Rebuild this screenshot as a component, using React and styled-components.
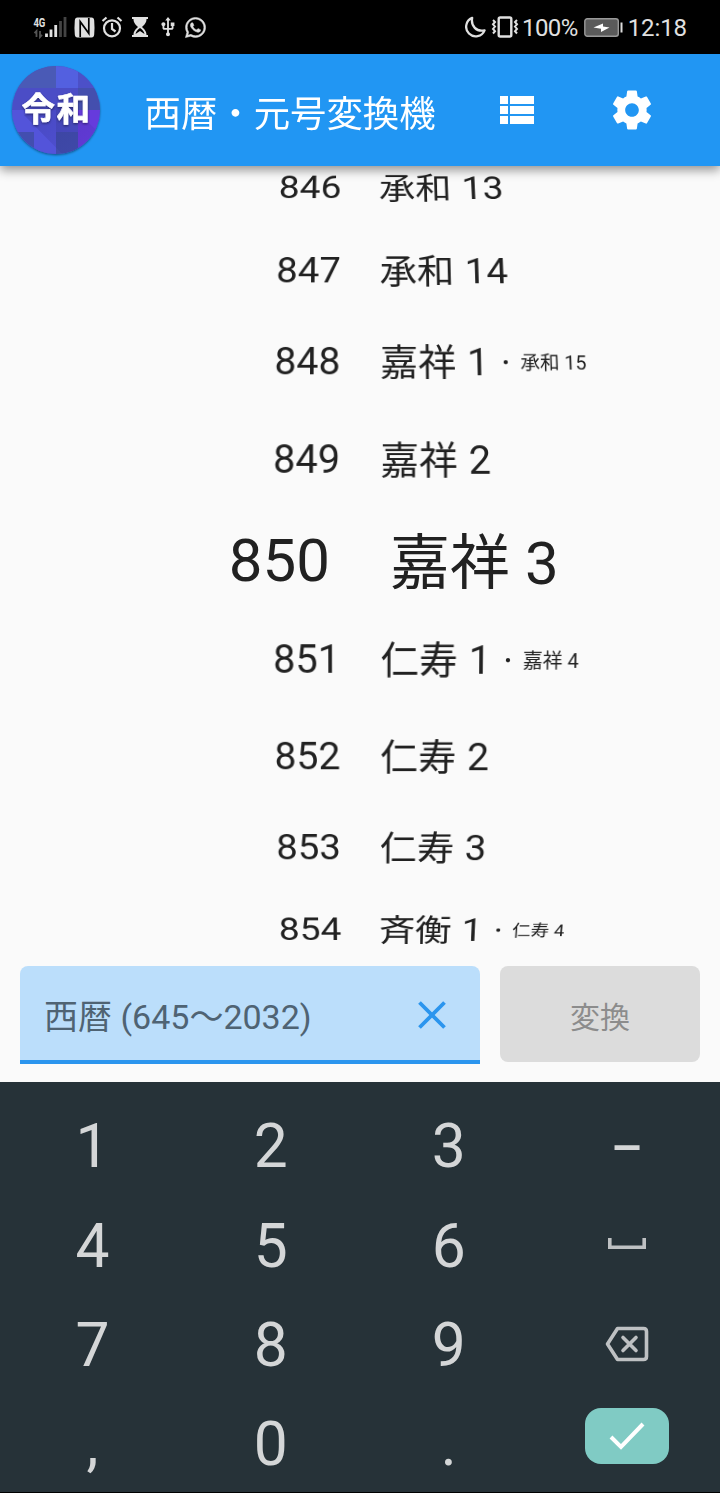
import React from 'react';
import styled, { createGlobalStyle } from 'styled-components';
import { FaWhatsapp } from 'react-icons/fa';
import { MdUsb } from 'react-icons/md';

const Global = createGlobalStyle`
  * { box-sizing: border-box; }
  body { margin: 0; background: #fafafa; font-family: Roboto, "Noto Sans CJK JP", sans-serif; }
  svg { display: block; flex: none; }
`;

const Screen = styled.div`
  width: 720px;
  height: 1493px;
  display: flex;
  flex-direction: column;
  overflow: hidden;
  background: #fafafa;
`;

const StatusBar = styled.div`
  height: 54px;
  flex: none;
  background: #000;
  color: #e0e0e0;
  display: flex;
  align-items: center;
  justify-content: space-between;
  padding: 0 33px 0 33px;
`;

const StatusText = styled.span`
  font-size: 24px;
  line-height: 28px;
  padding-top: 2px;
  margin-left: ${(p) => p.$gap}px;
  letter-spacing: ${(p) => p.$track || 0}px;
`;

const StatusGroup = styled.div`
  display: flex;
  align-items: center;
`;

const Spacer = styled.span`
  width: ${(p) => p.$w}px;
`;

const AppBar = styled.header`
  height: 112px;
  flex: none;
  background: #2196f3;
  box-shadow: 0 4px 10px rgba(0, 0, 0, 0.42);
  display: flex;
  align-items: center;
  padding-left: 8px;
  z-index: 1;
`;

const Title = styled.h1`
  margin: 2px 0 0 40.5px;
  width: 347.5px;
  font-family: "Noto Sans CJK JP", sans-serif;
  font-size: 36.4px;
  font-weight: 400;
  line-height: 52px;
  color: #fff;
  white-space: nowrap;
`;

const IconButton = styled.button`
  padding: 0;
  border: 0;
  background: none;
  color: #fff;
  margin-right: ${(p) => p.$gap || 0}px;
`;

const Wheel = styled.main`
  height: 800px;
  flex: none;
  overflow: hidden;
`;

const WheelTrack = styled.div`
  margin-top: -18px;
  display: flex;
  flex-direction: column;
`;

const WheelRow = styled.div`
  height: ${(p) => p.$h}px;
  display: grid;
  grid-template-columns: ${(p) => (p.$big ? '330px 1fr' : '340px 1fr')};
  column-gap: ${(p) => (p.$big ? 60 : 40)}px;
  align-items: center;
  font-size: ${(p) => (p.$big ? 60 : 40)}px;
  line-height: 1;
  color: #212121;
  white-space: nowrap;
  transform: perspective(1600px) rotateX(${(p) => p.$tilt}deg) scale(${(p) => p.$scale});
`;

const Year = styled.span`
  text-align: right;
`;

const Era = styled.span`
  padding-top: ${(p) => (p.$big ? 5 : 2)}px;
  display: flex;
  align-items: baseline;
`;

const EraName = styled.span`
  display: inline-block;
  font-size: ${(p) => (p.$big ? 60 : 39)}px;
  padding-left: ${(p) => (p.$big ? 0 : 0.6)}px;
`;

const EraYear = styled.span`
  padding-left: ${(p) => (p.$big ? 0 : 1)}px;
  white-space: pre;
`;

const AltEra = styled.span`
  display: flex;
  align-self: center;
  gap: 5px;
  font-size: 20px;
  margin-left: 7px;
`;

const Form = styled.form`
  height: 116px;
  flex: none;
  display: flex;
  align-items: flex-start;
  gap: 20px;
  padding: 0 20px;
`;

const Field = styled.div`
  width: 460px;
  height: 98px;
  background: #bbdefb;
  border-bottom: 4px solid #2b95ee;
  border-radius: 8px 8px 0 0;
  display: flex;
  align-items: center;
  justify-content: space-between;
  padding: 4px 34px 0 24px;
  color: #4f6373;
`;

const Placeholder = styled.span`
  padding-top: 3px;
  font-size: 34px;
  line-height: 48px;
`;

const ConvertButton = styled.button`
  width: 200px;
  height: 96px;
  border: 0;
  border-radius: 8px;
  background: #dcdcdc;
  color: #8c8c8c;
  font: 400 30px/44px "Noto Sans CJK JP", sans-serif;
  padding: 1px 0 0;
`;

const Keyboard = styled.div`
  height: 411px;
  flex: none;
  background: #263238;
  border-bottom: 1px solid #000;
  padding: 16px 4px 0 3.5px;
  display: grid;
  grid-template-columns: repeat(4, 178.1px);
  grid-template-rows: repeat(4, 99.2px);
`;

const Key = styled.button`
  border: 0;
  padding: 0 0 ${(p) => p.$lift || 0}px;
  background: none;
  color: #d4d6d7;
  font: ${(p) => p.$weight || 400} ${(p) => p.$size || 60.5}px/1 Roboto, sans-serif;
  display: flex;
  align-items: center;
  justify-content: center;
`;

const Enter = styled.span`
  width: 84px;
  height: 56px;
  border-radius: 16px;
  background: #80cbc4;
  display: flex;
  align-items: center;
  justify-content: center;
`;

function SignalIcon() {
  return (
    <svg width="34" height="24" viewBox="33 15 34 24">
      <text x="33.4" y="26.500" fontSize="13" fontWeight="700" fill="#e0e0e0" textLength="12" lengthAdjust="spacingAndGlyphs">4G</text>
      <path d="M36.5 37v-6l-2 2.2M40 31v6l2-2.2" stroke="#555" strokeWidth="1.8" fill="none" />
      <path d="M46.5 37v-3.500M51 37v-7.500M55.700 37v-12" stroke="#e0e0e0" strokeWidth="2.800" />
      <path d="M60.500 37V21M65 37V17" stroke="#444" strokeWidth="2.800" />
    </svg>
  );
}

function NfcIcon() {
  return (
    <svg width="21" height="21" viewBox="0 0 21 21">
      <path d="M3.500.5h14q2.500 0 2.700 3 .6 7 0 14-.2 3-2.700 3h-14q-2.500 0-2.700-3-.6-7 0-14 .2-3 2.700-3z" fill="#e0e0e0" />
      <path d="M6.200 20V4.500l8 11M14.800 1v15.500l-8-11" fill="none" stroke="#000" strokeWidth="1.700" />
    </svg>
  );
}

function AlarmIcon() {
  return (
    <svg width="22" height="22" viewBox="0 0 22 22" fill="none" stroke="#e0e0e0" strokeWidth="2.200">
      <circle cx="11" cy="12.300" r="8" />
      <path d="M11 7v6l3.500 2.500M1.500 5l4-3.500M20.500 5l-4-3.500" />
    </svg>
  );
}

function HourglassIcon() {
  return (
    <svg width="16" height="20" viewBox="0 0 16 20" fill="#e0e0e0">
      <path d="M0 0h16v2h-1.500c0 4-2.500 6-4.500 8 2 2 4.500 4 4.500 8H16v2H0v-2h1.500c0-4 2.500-6 4.500-8-2-2-4.500-4-4.500-8H0z" />
      <path d="M8 11c-2.500 1.500-4 3.500-4.500 6L8 14l4.500 3c-.5-2.500-2-4.500-4.500-6z" fill="#000" />
    </svg>
  );
}

function MoonIcon() {
  return (
    <svg width="21" height="22" viewBox="0 0 22 22" fill="none" stroke="#e0e0e0" strokeWidth="2.400" strokeLinejoin="round">
      <path d="M7.500 1.500A10 10 0 1 0 20.500 14.500C12 16.500 6 10 7.500 1.500z" />
    </svg>
  );
}

function VibrateIcon() {
  return (
    <svg width="28" height="22" viewBox="0 0 28 22" fill="none" stroke="#e0e0e0" strokeWidth="2">
      <rect x="7.700" y="1.500" width="12.600" height="19" rx="1.500" strokeWidth="2.400" />
      <path d="M2 4l2 2-2 2.300 2 2.300-2 2.300 2 2.300-2 2.300M26 4l-2 2 2 2.300-2 2.300 2 2.300-2 2.300 2 2.300" />
    </svg>
  );
}

function BatteryIcon() {
  return (
    <svg width="39" height="19" viewBox="0 0 39 19">
      <rect x=".8" y=".8" width="33.500" height="17.400" rx="2.500" fill="#5a5a5a" stroke="#999" strokeWidth="1.400" />
      <path d="M9.500 9.500l9.500-4v3l6.500 1-8.500 4.500v-3.200z" fill="#fff" />
      <path d="M37.500 4.500v10" stroke="#ddd" strokeWidth="2" />
    </svg>
  );
}

function Logo() {
  return (
    <svg width="96" height="96" viewBox="8 62 96 96">
      <defs>
        <clipPath id="disc"><circle cx="56" cy="110" r="44" /></clipPath>
        <filter id="drop" x="-20%" y="-20%" width="140%" height="140%">
          <feDropShadow dx="0" dy="1.200" stdDeviation="1" floodOpacity=".45" />
        </filter>
        <linearGradient id="longShadow" x1="0" y1="0" x2="1" y2="1">
          <stop offset="0" stopColor="#2a2a80" stopOpacity=".3" />
          <stop offset="1" stopColor="#2a2a80" stopOpacity="0" />
        </linearGradient>
      </defs>
      <circle cx="56" cy="110" r="44" fill="#4c4ec6" filter="url(#drop)" />
      <g clipPath="url(#disc)">
        <path d="M12 66h44v22H12z" fill="#4a5ab6" />
        <path d="M56 66h22v22H56z" fill="#5360e0" />
        <path d="M78 66h22v22H78z" fill="#4c50c8" />
        <path d="M78 88h22v22H78z" fill="#444fae" />
        <path d="M12 110h44v44H12z" fill="#5354da" />
        <path d="M12 132h22v22H12z" fill="#434eaf" />
        <path d="M56 132h22v22H56z" fill="#414cac" />
        <path d="M78 110h22v44H78z" fill="#663bdc" />
        <path d="M24 115l44-13 40 40v30H80z" fill="url(#longShadow)" />
      </g>
      <text
        x="21.500"
        y="120.500"
        fontFamily="Noto Sans CJK JP"
        fontSize="33.500"
        fontWeight="700"
        letterSpacing="1.500"
        fill="#fff"
        stroke="#fff"
        strokeWidth=".6"
        strokeLinejoin="round"
        filter="url(#drop)"
      >
        令和
      </text>
    </svg>
  );
}

const rows = [
  { h: 80, tilt: 33, scale: 0.928, year: '846', era: '承和', n: 13 },
  { h: 86, tilt: 24, scale: 0.957, year: '847', era: '承和', n: 14 },
  { h: 96, tilt: 15, scale: 0.978, year: '848', era: '嘉祥', n: 1, alt: '承和 15' },
  { h: 100, tilt: 7, scale: 0.993, year: '849', era: '嘉祥', n: 2 },
  { h: 102, tilt: 0, scale: 1, year: '850', era: '嘉祥', n: 3, big: true },
  { h: 96, tilt: -7, scale: 0.993, year: '851', era: '仁寿', n: 1, alt: '嘉祥 4' },
  { h: 98, tilt: -15, scale: 0.978, year: '852', era: '仁寿', n: 2 },
  { h: 84, tilt: -24, scale: 0.957, year: '853', era: '仁寿', n: 3 },
  { h: 80, tilt: -33, scale: 0.928, year: '854', era: '斉衡', n: 1, alt: '仁寿 4' },
];

const keys = [
  { name: '1' },
  { name: '2' },
  { name: '3' },
  { name: '–', size: 50, weight: 500 },
  { name: '4' },
  { name: '5' },
  { name: '6' },
  { name: 'space', lift: 5 },
  { name: '7' },
  { name: '8' },
  { name: '9' },
  { name: 'back', lift: 3 },
  { name: ',' },
  { name: '0' },
  { name: '.' },
  { name: 'enter', lift: 18 },
];

function KeyFace({ name }) {
  if (name === 'space') {
    return (
      <svg width="38" height="12" viewBox="0 0 38 12" fill="none" stroke="#bec1c3" strokeWidth="3.600">
        <path d="M1.800 0v9.200h34.400V0" />
      </svg>
    );
  }
  if (name === 'back') {
    return (
      <svg width="44" height="36" viewBox="0 0 44 36" fill="none" stroke="#bec1c3" strokeWidth="3.600" strokeLinejoin="round">
        <path d="M12.500 2.500h26q3 0 3 3v25q0 3-3 3h-26L2.500 18z" />
        <path d="M18 11.500l13 13m0-13l-13 13" strokeLinecap="round" />
      </svg>
    );
  }
  if (name === 'enter') {
    return (
      <Enter>
        <svg width="36" height="28" viewBox="0 0 36 28" fill="none" stroke="#fff" strokeWidth="4">
          <path d="M2 15l10 10L34 2" />
        </svg>
      </Enter>
    );
  }
  return name;
}

export default function App() {
  return (
    <Screen>
      <Global />
      <StatusBar>
        <StatusGroup>
          <SignalIcon />
          <Spacer $w={6.5} />
          <NfcIcon />
          <Spacer $w={6.5} />
          <AlarmIcon />
          <Spacer $w={9} />
          <HourglassIcon />
          <Spacer $w={9} />
          <MdUsb size={22} />
          <Spacer $w={5} />
          <FaWhatsapp size={23} stroke="currentColor" strokeWidth="12" />
        </StatusGroup>
        <StatusGroup>
          <MoonIcon />
          <Spacer $w={5} />
          <VibrateIcon />
          <StatusText $gap={3} $track={-0.6}>100%</StatusText>
          <Spacer $w={6} />
          <BatteryIcon />
          <StatusText $gap={5} $track={-0.1}>12:18</StatusText>
        </StatusGroup>
      </StatusBar>
      <AppBar>
        <Logo />
        <Title>西暦・元号変換機</Title>
        <IconButton $gap={68} aria-label="list">
          <svg width="48" height="48" viewBox="0 0 24 24" fill="currentColor">
            <path d="M4 14h4v-4H4v4zm0 5h4v-4H4v4zM4 9h4V5H4v4zm5 5h12v-4H9v4zm0 5h12v-4H9v4zM9 5v4h12V5H9z" />
          </svg>
        </IconButton>
        <IconButton aria-label="settings">
          <svg width="48" height="48" viewBox="-0.3 -0.3 24.600 24.600" fill="currentColor">
            <path d="M19.43 12.98c.04-.32.07-.64.07-.98s-.03-.66-.07-.98l2.11-1.65c.19-.15.24-.42.12-.64l-2-3.46c-.12-.22-.39-.3-.61-.22l-2.49 1c-.52-.4-1.08-.73-1.69-.98l-.38-2.65C14.46 2.18 14.25 2 14 2h-4c-.25 0-.46.18-.49.42l-.38 2.65c-.61.25-1.17.59-1.69.98l-2.49-1c-.23-.09-.49 0-.61.22l-2 3.46c-.13.22-.07.49.12.64l2.11 1.65c-.04.32-.07.65-.07.98s.03.66.07.98l-2.11 1.65c-.19.15-.24.42-.12.64l2 3.46c.12.22.39.3.61.22l2.49-1c.52.4 1.08.73 1.69.98l.38 2.65c.03.24.24.42.49.42h4c.25 0 .46-.18.49-.42l.38-2.65c.61-.25 1.17-.59 1.69-.98l2.49 1c.23.09.49 0 .61-.22l2-3.46c.12-.22.07-.49-.12-.64l-2.11-1.65zM12 15.5c-1.93 0-3.5-1.57-3.5-3.5s1.57-3.5 3.5-3.5 3.5 1.57 3.5 3.5-1.57 3.5-3.5 3.5z" />
          </svg>
        </IconButton>
      </AppBar>
      <Wheel>
        <WheelTrack>
          {rows.map((r) => (
            <WheelRow key={r.year} $h={r.h} $tilt={r.tilt} $scale={r.scale} $big={r.big}>
              <Year>{r.year}</Year>
              <Era $big={r.big}>
                <EraName $big={r.big}>{r.era}</EraName>
                <EraYear $big={r.big}>{` ${r.n}`}</EraYear>
                {r.alt && (
                  <AltEra>
                    <span>・</span>
                    <span>{r.alt}</span>
                  </AltEra>
                )}
              </Era>
            </WheelRow>
          ))}
        </WheelTrack>
      </Wheel>
      <Form>
        <Field>
          <Placeholder>西暦 (645〜2032)</Placeholder>
          <svg width="28" height="28" viewBox="0 0 28 28" stroke="#2b95ee" strokeWidth="3.800">
            <path d="M1.500 1.500l25 25m0-25l-25 25" />
          </svg>
        </Field>
        <ConvertButton type="button">変換</ConvertButton>
      </Form>
      <Keyboard>
        {keys.map((k) => (
          <Key key={k.name} type="button" $size={k.size} $weight={k.weight} $lift={k.lift}>
            <KeyFace name={k.name} />
          </Key>
        ))}
      </Keyboard>
    </Screen>
  );
}
